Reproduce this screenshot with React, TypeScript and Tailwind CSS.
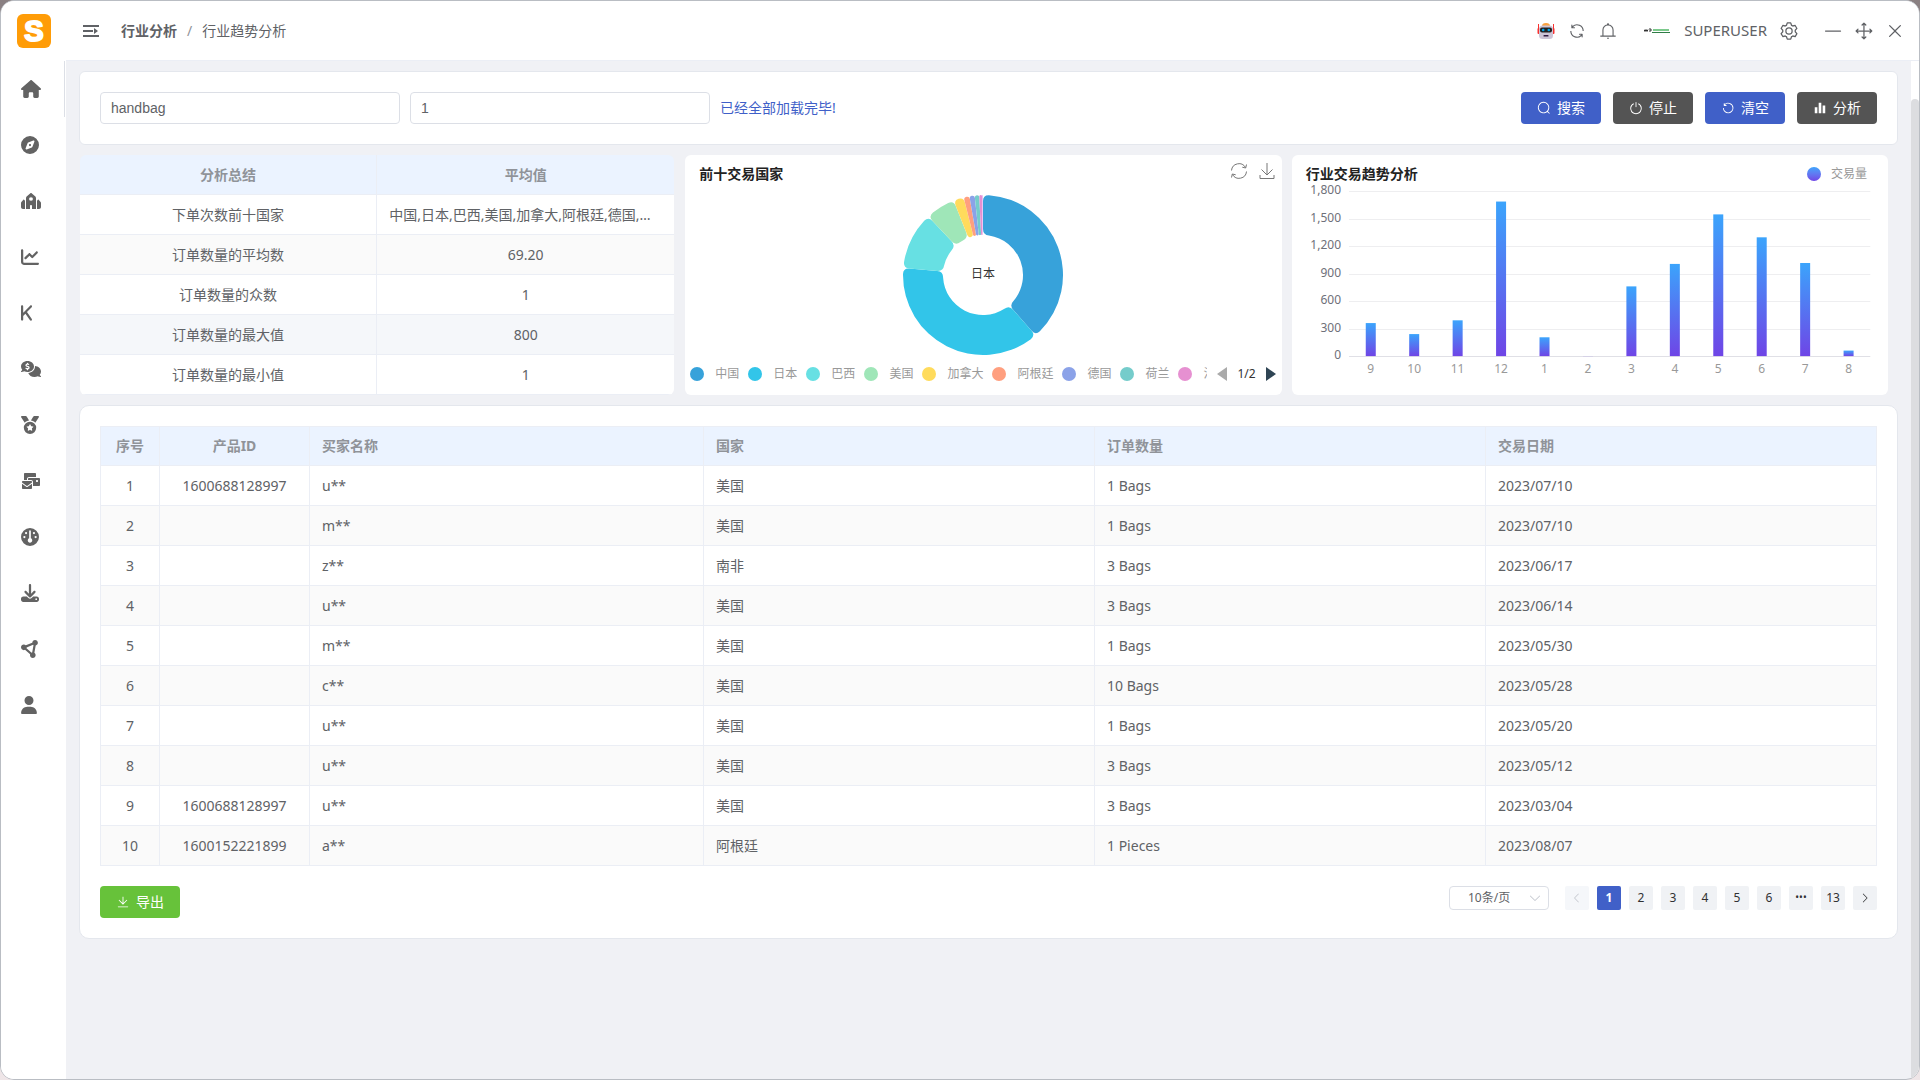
import React from 'react';
import {
  FaHouse,
  FaCompass,
  FaSynagogue,
  FaChartLine,
  FaK,
  FaCommentsDollar,
  FaMedal,
  FaEnvelopesBulk,
  FaGauge,
  FaDownload,
  FaCircleNodes,
  FaUser,
} from 'react-icons/fa6';

interface IconProps {
  className?: string;
}

// Element style icons, all on a 1024 grid
const ICON_PATHS = {
  close:
    'M764.288 214.592 512 466.88 259.712 214.592a31.936 31.936 0 0 0-45.12 45.12L466.752 512 214.528 764.224a31.936 31.936 0 1 0 45.12 45.184L512 557.184l252.288 252.288a31.936 31.936 0 0 0 45.12-45.12L557.12 512.064l252.288-252.352a31.936 31.936 0 1 0-45.12-45.184z',
  search:
    'm795.904 750.72 124.992 124.928a32 32 0 0 1-45.248 45.248L750.656 795.904a416 416 0 1 1 45.248-45.248zM480 832a352 352 0 1 0 0-704 352 352 0 0 0 0 704z',
  minus: 'M128 544h768a32 32 0 1 0 0-64H128a32 32 0 0 0 0 64z',
  rank:
    'm186.496 544 41.408 41.344a32 32 0 1 1-45.248 45.312l-96-96a32 32 0 0 1 0-45.312l96-96a32 32 0 1 1 45.248 45.312L186.496 480h290.816V186.432l-41.472 41.472a32 32 0 1 1-45.248-45.184l96-96.128a32 32 0 0 1 45.312 0l96 96.064a32 32 0 0 1-45.248 45.184l-41.344-41.28V480H832l-41.344-41.344a32 32 0 0 1 45.248-45.312l96 96a32 32 0 0 1 0 45.312l-96 96a32 32 0 0 1-45.248-45.312L832 544H541.312v293.44l41.344-41.28a32 32 0 1 1 45.248 45.248l-96 96a32 32 0 0 1-45.312 0l-96-96a32 32 0 1 1 45.312-45.248l41.408 41.408V544H186.496z',
  setting:
    'M600.704 64a32 32 0 0 1 30.464 22.208l35.2 109.376c14.784 7.232 28.928 15.36 42.432 24.512l112.384-24.192a32 32 0 0 1 34.432 15.36L944.32 364.8a32 32 0 0 1-4.032 37.504l-77.12 85.12a357.12 357.12 0 0 1 0 49.024l77.12 85.248a32 32 0 0 1 4.032 37.504l-88.704 153.6a32 32 0 0 1-34.432 15.296L708.8 803.904c-13.44 9.088-27.648 17.28-42.368 24.512l-35.264 109.376A32 32 0 0 1 600.704 960H423.296a32 32 0 0 1-30.464-22.208L357.696 828.48a351.616 351.616 0 0 1-42.56-24.64l-112.32 24.256a32 32 0 0 1-34.432-15.36L79.68 659.2a32 32 0 0 1 4.032-37.504l77.12-85.248a357.12 357.12 0 0 1 0-48.896l-77.12-85.248A32 32 0 0 1 79.68 364.8l88.704-153.6a32 32 0 0 1 34.432-15.296l112.32 24.256c13.568-9.152 27.776-17.408 42.56-24.64l35.2-109.312A32 32 0 0 1 423.232 64H600.64zm-23.424 64H446.72l-36.352 113.088-24.512 11.968a294.113 294.113 0 0 0-34.816 20.096l-22.656 15.36-116.224-25.088-65.28 113.152 79.68 88.192-1.92 27.136a293.12 293.12 0 0 0 0 40.192l1.92 27.136-79.808 88.192 65.344 113.152 116.224-25.024 22.656 15.296a294.113 294.113 0 0 0 34.816 20.096l24.512 11.968L446.72 896h130.688l36.48-113.152 24.448-11.904a288.282 288.282 0 0 0 34.752-20.096l22.592-15.296 116.288 25.024 65.28-113.152-79.744-88.192 1.92-27.136a293.12 293.12 0 0 0 0-40.256l-1.92-27.136 79.808-88.128-65.344-113.152-116.288 24.96-22.592-15.232a287.616 287.616 0 0 0-34.752-20.096l-24.448-11.904L577.344 128zM512 320a192 192 0 1 1 0 384 192 192 0 0 1 0-384zm0 64a128 128 0 1 0 0 256 128 128 0 0 0 0-256z',
  bell:
    'M512 64a64 64 0 0 1 64 64v64H448v-64a64 64 0 0 1 64-64zM256 768h512V448a256 256 0 1 0-512 0v320zm256-640a320 320 0 0 1 320 320v384H192V448a320 320 0 0 1 320-320zM96 768h832q32 0 32 32t-32 32H96q-32 0-32-32t32-32zm352 128h128a64 64 0 0 1-128 0z',
  refresh:
    'M771.776 794.88A384 384 0 0 1 128 512h64a320 320 0 0 0 555.712 216.448H654.72a32 32 0 1 1 0-64h149.056a32 32 0 0 1 32 32v148.928a32 32 0 1 1-64 0v-50.56zM276.288 295.616h92.992a32 32 0 0 1 0 64H220.16a32 32 0 0 1-32-32V178.56a32 32 0 0 1 64 0v50.56A384 384 0 0 1 896.128 512h-64a320 320 0 0 0-555.776-216.384z',
  refreshLeft:
    'M289.088 296.704h92.992a32 32 0 0 1 0 64H232.96a32 32 0 0 1-32-32V179.712a32 32 0 0 1 64 0v50.56a384 384 0 0 1 643.84 282.88 384 384 0 0 1-383.936 384 384 384 0 0 1-384-384h64a320 320 0 1 0 640 0 320 320 0 0 0-555.712-216.448z',
  power:
    'M352 159.872V230.4a352 352 0 1 0 320 0v-70.528A416.128 416.128 0 0 1 512 960a416 416 0 0 1-160-800.128zM512 64q32 0 32 32v320q0 32-32 32t-32-32V96q0-32 32-32z',
  histogram: 'M416 896V128h192v768H416zm-288 0V448h192v448H128zm576 0V320h192v576H704z',
  download:
    'M160 832h704a32 32 0 1 1 0 64H160a32 32 0 1 1 0-64zm384-253.696 236.288-236.352 45.248 45.248L508.8 704 192 387.2l45.248-45.248L480 584.704V128h64v450.304z',
  arrowLeft:
    'M609.408 149.376 277.76 489.6a32 32 0 0 0 0 44.672l331.648 340.352a29.12 29.12 0 0 0 41.728 0 30.592 30.592 0 0 0 0-42.752L339.264 511.936l311.872-319.872a30.592 30.592 0 0 0 0-42.688 29.12 29.12 0 0 0-41.728 0z',
  arrowRight:
    'M340.864 149.312a30.592 30.592 0 0 0 0 42.752L652.736 512 340.864 831.872a30.592 30.592 0 0 0 0 42.752 29.12 29.12 0 0 0 41.728 0L714.24 534.336a32 32 0 0 0 0-44.672L382.592 149.376a29.12 29.12 0 0 0-41.728 0z',
  arrowDown:
    'M831.872 340.864 512 652.672 192.128 340.864a30.592 30.592 0 0 0-42.752 0 29.12 29.12 0 0 0 0 41.6L489.664 714.24a32 32 0 0 0 44.672 0l340.288-331.712a29.12 29.12 0 0 0 0-41.728 30.592 30.592 0 0 0-42.752 0z',
};

const ElIcon: React.FC<IconProps & { name: keyof typeof ICON_PATHS }> = ({ name, className }) => (
  <svg viewBox="0 0 1024 1024" fill="currentColor" className={className} aria-hidden="true">
    <path d={ICON_PATHS[name]} />
  </svg>
);

const LogoIcon: React.FC<IconProps> = ({ className }) => (
  <svg viewBox="0 0 34 34" className={className} aria-hidden="true">
    <rect width="34" height="34" rx="6" fill="#ff9c07" />
    <text
      x="17"
      y="27"
      textAnchor="middle"
      fontFamily="Liberation Sans, sans-serif"
      fontWeight="700"
      fontSize="29"
      fill="#fff"
      stroke="#fff"
      strokeWidth="2"
      strokeLinejoin="round"
    >
      S
    </text>
  </svg>
);

const FoldIcon: React.FC<IconProps> = ({ className }) => (
  <svg viewBox="0 0 16 14" fill="currentColor" className={className} aria-hidden="true">
    <path d="M0 1h16v2H0zM0 6h10v2H0zM0 11h16v2H0zM11 4l4 3-4 3z" />
  </svg>
);

const RobotIcon: React.FC<IconProps> = ({ className }) => (
  <svg viewBox="0 0 18 18" className={className} aria-hidden="true">
    <path d="M1.5 2v7M16.5 2v7" stroke="#f8312f" strokeWidth="1" />
    <rect x="0.5" y="6" width="2.5" height="6" rx="1" fill="#f8312f" />
    <rect x="15" y="6" width="2.5" height="6" rx="1" fill="#f8312f" />
    <path d="M5 4a4 3 0 0 1 8 0z" fill="#f9a03f" />
    <rect x="2" y="3.5" width="14" height="13.5" rx="3.5" fill="#cdc4d6" />
    <rect x="3" y="5.5" width="12" height="5" rx="2" fill="#212121" />
    <circle cx="6.2" cy="8" r="1.3" fill="#00a6ed" />
    <circle cx="11.8" cy="8" r="1.3" fill="#00a6ed" />
    <rect x="6.5" y="13" width="5" height="1.5" rx="0.5" fill="#321b41" />
  </svg>
);

const navItems = [
  { label: '首页', icon: <FaHouse className="h-[18px] w-5" /> },
  { label: '发现', icon: <FaCompass className="size-[18px]" /> },
  { label: '店铺', icon: <FaSynagogue className="h-[18px] w-5" /> },
  { label: '趋势', icon: <FaChartLine className="size-[18px]" /> },
  { label: '关键词', icon: <FaK className="h-[18px] w-[11px]" /> },
  { label: '询盘', icon: <FaCommentsDollar className="h-[18px] w-5" /> },
  { label: '排名', icon: <FaMedal className="size-[18px]" /> },
  { label: '邮件', icon: <FaEnvelopesBulk className="h-[18px] w-5" /> },
  { label: '仪表盘', icon: <FaGauge className="size-[18px]" /> },
  { label: '下载', icon: <FaDownload className="size-[18px]" /> },
  { label: '网络', icon: <FaCircleNodes className="size-[18px]" /> },
  { label: '用户', icon: <FaUser className="h-[18px] w-4" /> },
];

const summaryRows = [
  { label: '下单次数前十国家', value: '中国,日本,巴西,美国,加拿大,阿根廷,德国,荷兰,法国,英国', bg: 'bg-white' },
  { label: '订单数量的平均数', value: '69.20', bg: 'bg-[#fafafa]' },
  { label: '订单数量的众数', value: '1', bg: 'bg-white' },
  { label: '订单数量的最大值', value: '800', bg: 'bg-[#f5f7fa]' },
  { label: '订单数量的最小值', value: '1', bg: 'bg-white' },
];

// end is the closing angle in degrees, clockwise from the top
const slices = [
  { name: '中国', color: '#37a2da', end: 139 },
  { name: '日本', color: '#32c5e9', end: 275 },
  { name: '巴西', color: '#67e0e3', end: 317 },
  { name: '美国', color: '#9fe6b8', end: 338.5 },
  { name: '加拿大', color: '#ffdb5c', end: 346 },
  { name: '阿根廷', color: '#ff9f7f', end: 350.2 },
  { name: '德国', color: '#8ba2e8', end: 354 },
  { name: '荷兰', color: '#75cccb', end: 357.3 },
  { name: '法国', color: '#e690d1', end: 359.3 },
  { name: '英国', color: '#e7bcf3', end: 360 },
];

const months = [
  { month: '9', value: 360 },
  { month: '10', value: 240 },
  { month: '11', value: 390 },
  { month: '12', value: 1685 },
  { month: '1', value: 205 },
  { month: '2', value: 1 },
  { month: '3', value: 760 },
  { month: '4', value: 1005 },
  { month: '5', value: 1545 },
  { month: '6', value: 1295 },
  { month: '7', value: 1015 },
  { month: '8', value: 60 },
];

const orders = [
  { productId: '1600688128997', buyer: 'u**', country: '美国', amount: '1 Bags', date: '2023/07/10' },
  { productId: '', buyer: 'm**', country: '美国', amount: '1 Bags', date: '2023/07/10' },
  { productId: '', buyer: 'z**', country: '南非', amount: '3 Bags', date: '2023/06/17' },
  { productId: '', buyer: 'u**', country: '美国', amount: '3 Bags', date: '2023/06/14' },
  { productId: '', buyer: 'm**', country: '美国', amount: '1 Bags', date: '2023/05/30' },
  { productId: '', buyer: 'c**', country: '美国', amount: '10 Bags', date: '2023/05/28' },
  { productId: '', buyer: 'u**', country: '美国', amount: '1 Bags', date: '2023/05/20' },
  { productId: '', buyer: 'u**', country: '美国', amount: '3 Bags', date: '2023/05/12' },
  { productId: '1600688128997', buyer: 'u**', country: '美国', amount: '3 Bags', date: '2023/03/04' },
  { productId: '1600152221899', buyer: 'a**', country: '阿根廷', amount: '1 Pieces', date: '2023/08/07' },
];

const pages = ['1', '2', '3', '4', '5', '6', '•••', '13'];

const polar = (r: number, deg: number) => {
  const a = ((deg - 90) * Math.PI) / 180;
  return `${(80 + r * Math.cos(a)).toFixed(2)} ${(80 + r * Math.sin(a)).toFixed(2)}`;
};

// ring sector with rounded corners
const slicePath = (start: number, end: number) => {
  const outer = 80;
  const inner = 40;
  const span = ((end - start) * Math.PI) / 180;
  const co = Math.min(6, (span * outer) / 2);
  const ci = Math.min(6, (span * inner) / 2);
  const ao = ((co / outer) * 180) / Math.PI;
  const ai = ((ci / inner) * 180) / Math.PI;
  const large = end - start > 180 ? 1 : 0;
  return [
    `M${polar(inner + ci, start)}`,
    `L${polar(outer - co, start)}`,
    `Q${polar(outer, start)} ${polar(outer, start + ao)}`,
    `A${outer} ${outer} 0 ${large} 1 ${polar(outer, end - ao)}`,
    `Q${polar(outer, end)} ${polar(outer - co, end)}`,
    `L${polar(inner + ci, end)}`,
    `Q${polar(inner, end)} ${polar(inner, end - ai)}`,
    `A${inner} ${inner} 0 ${large} 0 ${polar(inner, start + ai)}`,
    `Q${polar(inner, start)} ${polar(inner + ci, start)}`,
    'Z',
  ].join(' ');
};

const Sidebar: React.FC = () => (
  <aside className="flex w-[65px] shrink-0 flex-col bg-white">
    <div className="flex h-[60px] items-center pl-4">
      <LogoIcon className="size-[34px]" />
    </div>
    <nav className="relative flex flex-col">
      <span className="absolute top-0 right-px h-14 w-px bg-[#dcdfe6]" />
      {navItems.map((item) => (
        <a key={item.label} href="#" aria-label={item.label} className="flex h-14 items-center pl-5 text-[#636363]">
          {item.icon}
        </a>
      ))}
    </nav>
  </aside>
);

const TopBar: React.FC = () => (
  <header className="flex h-[60px] items-center border-b border-[#ebeef5] bg-white pr-[14px] pl-[17px] text-[#606266]">
    <button type="button" aria-label="折叠菜单">
      <FoldIcon className="h-[14px] w-4" />
    </button>
    <nav className="ml-[22px] flex items-center text-sm">
      <a href="#" className="font-bold">行业分析</a>
      <span className="mx-[10px] text-[#909399]">/</span>
      <span>行业趋势分析</span>
    </nav>
    <div className="ml-auto flex items-center">
      <div className="flex items-center gap-[13px]">
        <RobotIcon className="size-[18px]" />
        <button type="button" aria-label="刷新"><ElIcon name="refresh" className="size-[18px]" /></button>
        <button type="button" aria-label="通知"><ElIcon name="bell" className="size-[18px]" /></button>
      </div>
      <svg viewBox="0 0 26 6" className="ml-[27px] h-[6px] w-[26px]" aria-hidden="true">
        <path d="M0 1.5l1 2 1-2 1 2 1-2M6 0v4M6 2h2" stroke="#333" fill="none" />
        <path d="M9 2h16" stroke="#7cc98c" strokeWidth="2" />
        <path d="M8 4.5h18" stroke="#2f7d46" />
      </svg>
      <span className="ml-[14px] text-[15px]">SUPERUSER</span>
      <button type="button" aria-label="设置" className="ml-3"><ElIcon name="setting" className="size-5" /></button>
      <div className="ml-6 flex items-center gap-[11px]">
        <button type="button" aria-label="最小化"><ElIcon name="minus" className="size-5" /></button>
        <button type="button" aria-label="移动"><ElIcon name="rank" className="size-5" /></button>
        <button type="button" aria-label="关闭"><ElIcon name="close" className="size-5" /></button>
      </div>
    </div>
  </header>
);

const SearchBar: React.FC = () => {
  const input =
    "h-8 w-[300px] rounded border border-[#dcdfe6] bg-white px-[10px] font-['Liberation_Sans',sans-serif] text-sm text-[#606266] outline-none";
  const button = 'flex h-8 w-20 items-center justify-center gap-[6px] rounded text-sm text-white';
  return (
    <section className="flex items-center rounded-md border border-[#e4e7ed] bg-white p-5">
      <div className="flex items-center gap-[10px]">
        <input type="text" aria-label="关键词" defaultValue="handbag" className={input} />
        <input type="text" aria-label="页数" defaultValue="1" className={input} />
        <span className="text-sm text-[#3f5fc8]">已经全部加载完毕!</span>
      </div>
      <div className="ml-auto flex gap-3">
        <button type="button" className={`${button} bg-[#4060c8]`}>
          <ElIcon name="search" className="size-[14px]" />
          搜索
        </button>
        <button type="button" className={`${button} bg-[#545454]`}>
          <ElIcon name="power" className="size-[14px]" />
          停止
        </button>
        <button type="button" className={`${button} bg-[#4060c8]`}>
          <ElIcon name="refreshLeft" className="size-[14px]" />
          清空
        </button>
        <button type="button" className={`${button} bg-[#545454]`}>
          <ElIcon name="histogram" className="size-[14px]" />
          分析
        </button>
      </div>
    </section>
  );
};

const SummaryTable: React.FC = () => (
  <div className="overflow-hidden rounded-md">
    <table className="w-full table-fixed border-separate border-spacing-0 text-center text-sm text-[#606266]">
      <thead>
        <tr className="bg-[#ebf3ff] text-[#909399]">
          <th className="h-10 border-r border-b border-[#ebeef5] p-0 font-bold">分析总结</th>
          <th className="h-10 border-b border-[#ebeef5] p-0 font-bold">平均值</th>
        </tr>
      </thead>
      <tbody>
        {summaryRows.map((row) => (
          <tr key={row.label} className={row.bg}>
            <td className="h-10 border-r border-b border-[#ebeef5] px-3 py-0">{row.label}</td>
            <td className="h-10 truncate border-b border-[#ebeef5] px-3 py-0">{row.value}</td>
          </tr>
        ))}
      </tbody>
    </table>
  </div>
);

const CountryChart: React.FC = () => (
  <div className="flex h-60 flex-col rounded-md bg-white">
    <div className="flex h-10 shrink-0 items-start justify-between pt-[7px] pr-[6px] pl-[14px]">
      <h2 className="text-sm leading-6 font-bold text-[#222]">前十交易国家</h2>
      <div className="flex gap-[10px] text-[#777]">
        <button type="button" aria-label="刷新图表">
          <svg viewBox="0 0 18 18" fill="none" stroke="currentColor" className="size-[18px]" aria-hidden="true">
            <path d="M1.5 8.5a7.5 7.5 0 0 1 14-3M16.5 9.5a7.5 7.5 0 0 1-14 3M16.5 2.5l-.8 3.5-3.4-.8M1.5 15.5l.8-3.5 3.4.8" />
          </svg>
        </button>
        <button type="button" aria-label="保存图片">
          <svg viewBox="0 0 18 18" fill="none" stroke="currentColor" className="size-[18px]" aria-hidden="true">
            <path d="M9 1v12M3.5 7.5 9 13l5.5-5.5M2 13v3.5h14V13" />
          </svg>
        </button>
      </div>
    </div>
    <svg viewBox="0 0 160 160" className="h-40 w-40 shrink-0 self-center">
      {slices.map((slice, i) => (
        <path key={slice.name} d={slicePath(i === 0 ? 0 : slices[i - 1].end, slice.end)} fill={slice.color} />
      ))}
      <text x="80" y="83" textAnchor="middle" fontSize="12" fill="#333">日本</text>
    </svg>
    <div className="flex h-[38px] items-center pr-[6px] pl-[5px] text-xs">
      <ul className="flex min-w-0 flex-1 gap-[9px] overflow-hidden whitespace-nowrap text-[#999]">
        {slices.slice(0, 9).map((slice) => (
          <li key={slice.name} className="flex shrink-0 items-center gap-[11px]">
            <span className="size-[14px] rounded-full" style={{ backgroundColor: slice.color }} />
            {slice.name}
          </li>
        ))}
      </ul>
      <div className="ml-[10px] flex items-center gap-[10px] text-[#333]">
        <button type="button" aria-label="上一页图例">
          <svg viewBox="0 0 10 14" className="h-[14px] w-[10px]"><path d="M10 0v14L0 7z" fill="#aaa" /></svg>
        </button>
        <span>1/2</span>
        <button type="button" aria-label="下一页图例">
          <svg viewBox="0 0 10 14" className="h-[14px] w-[10px]"><path d="M0 0v14l10-7z" fill="#2f4554" /></svg>
        </button>
      </div>
    </div>
  </div>
);

const TrendChart: React.FC = () => {
  const left = 57;
  const right = 578;
  const bottom = 173;
  const band = (right - left) / months.length;
  const toHeight = (value: number) => (value / 1800) * 165;
  return (
    <div className="flex h-60 flex-col rounded-md bg-white">
      <div className="flex h-7 shrink-0 items-start justify-between pt-[7px] pr-[21px] pl-[14px]">
        <h2 className="text-sm leading-6 font-bold text-[#222]">行业交易趋势分析</h2>
        <span className="flex items-center gap-[10px] text-xs leading-6 text-[#999]">
          <span className="size-[14px] rounded-full bg-linear-to-b from-[#3ba4fc] to-[#6f45e6]" />
          交易量
        </span>
      </div>
      <svg viewBox="0 0 596 212" className="w-full overflow-visible">
        <defs>
          <linearGradient id="bar" x1="0" y1="0" x2="0" y2="1">
            <stop offset="0" stopColor="#3ba4fc" />
            <stop offset="1" stopColor="#6f45e6" />
          </linearGradient>
        </defs>
        {[0, 300, 600, 900, 1200, 1500, 1800].map((tick) => {
          const y = bottom - toHeight(tick);
          return (
            <g key={tick}>
              <path d={`M${left} ${Math.round(y) + 0.5}H${right}`} stroke={tick === 0 ? '#e0e0e6' : '#eeeef0'} />
              <text x="49" y={y + 3} textAnchor="end" fontSize="12" fill="#6e7079">
                {tick.toLocaleString('en-US')}
              </text>
            </g>
          );
        })}
        {months.map((item, i) => {
          const center = left + band * (i + 0.5);
          const h = toHeight(item.value);
          return (
            <g key={item.month}>
              <rect x={center - 5} y={bottom - h} width="10" height={h} fill="url(#bar)" />
              <text x={center} y="190" textAnchor="middle" fontSize="12" fill="#999">{item.month}</text>
            </g>
          );
        })}
      </svg>
    </div>
  );
};

const OrdersTable: React.FC = () => {
  const cell = 'border-r border-b border-[#ebeef5] px-3 py-0';
  return (
    <table className="w-full table-fixed border-separate border-spacing-0 border-t border-l border-[#ebeef5] text-left text-sm text-[#606266]">
      <colgroup>
        <col className="w-[59px]" />
        <col className="w-[150px]" />
        <col className="w-[394px]" />
        <col />
        <col />
        <col />
      </colgroup>
      <thead>
        <tr className="bg-[#ebf3ff] text-[#909399]">
          <th className={`${cell} h-[39px] text-center font-bold`}>序号</th>
          <th className={`${cell} h-[39px] text-center font-bold`}>产品ID</th>
          <th className={`${cell} h-[39px] font-bold`}>买家名称</th>
          <th className={`${cell} h-[39px] font-bold`}>国家</th>
          <th className={`${cell} h-[39px] font-bold`}>订单数量</th>
          <th className={`${cell} h-[39px] font-bold`}>交易日期</th>
        </tr>
      </thead>
      <tbody>
        {orders.map((order, i) => (
          <tr key={i} className={i % 2 ? 'bg-[#fafafa]' : 'bg-white'}>
            <td className={`${cell} h-10 text-center`}>{i + 1}</td>
            <td className={`${cell} h-10 text-center`}>{order.productId}</td>
            <td className={`${cell} h-10`}>{order.buyer}</td>
            <td className={`${cell} h-10`}>{order.country}</td>
            <td className={`${cell} h-10`}>{order.amount}</td>
            <td className={`${cell} h-10`}>{order.date}</td>
          </tr>
        ))}
      </tbody>
    </table>
  );
};

const Pagination: React.FC = () => (
  <div className="flex items-center gap-2 text-xs text-[#303133]">
    <div className="relative mr-2">
      <select
        aria-label="每页条数"
        className="h-6 w-[100px] appearance-none rounded border border-[#dcdfe6] bg-white pl-[18px] text-xs text-[#606266] outline-none"
      >
        <option>10条/页</option>
      </select>
      <ElIcon name="arrowDown" className="pointer-events-none absolute top-[5px] right-[7px] size-[14px] text-[#c0c4cc]" />
    </div>
    <button type="button" aria-label="上一页" disabled className="flex size-6 items-center justify-center rounded-xs bg-[#f5f7fa] text-[#c0c4cc]">
      <ElIcon name="arrowLeft" className="size-3" />
    </button>
    {pages.map((page) => (
      <button
        key={page}
        type="button"
        className={`flex size-6 items-center justify-center rounded-xs ${
          page === '1' ? 'bg-[#4060c8] font-bold text-white' : page === '•••' ? 'bg-[#f0f2f5] text-[10px]' : 'bg-[#f0f2f5]'
        }`}
      >
        {page}
      </button>
    ))}
    <button type="button" aria-label="下一页" className="flex size-6 items-center justify-center rounded-xs bg-[#f0f2f5]">
      <ElIcon name="arrowRight" className="size-3" />
    </button>
  </div>
);

const App: React.FC = () => {
  return (
    <div className="flex min-h-screen bg-linear-to-b from-[#8a8082] to-[#efe6e8] font-['Noto_Sans','Noto_Sans_CJK_SC',sans-serif]">
      <div className="flex flex-1 overflow-hidden rounded-[14px] border border-[#b9bdc3] bg-[#f0f1f5]">
        <Sidebar />
        <div className="flex min-w-0 flex-1 flex-col">
          <TopBar />
          <div className="flex flex-1">
            <main className="flex min-w-0 flex-1 flex-col gap-[10px] px-[13px] py-[10px]">
              <SearchBar />
              <div className="grid grid-cols-3">
                <div className="pr-[11px] pl-px"><SummaryTable /></div>
                <div className="pr-[10px]"><CountryChart /></div>
                <div className="pr-[10px]"><TrendChart /></div>
              </div>
              <section className="rounded-[10px] border border-[#e4e7ed] bg-white p-5">
                <OrdersTable />
                <div className="mt-5 flex items-start justify-between">
                  <button type="button" className="flex h-8 w-20 items-center justify-center gap-[6px] rounded bg-[#67c23a] text-sm text-white">
                    <ElIcon name="download" className="size-[14px]" />
                    导出
                  </button>
                  <Pagination />
                </div>
              </section>
            </main>
            <div className="flex w-2 shrink-0 flex-col bg-white pt-[38px]">
              <div className="flex-1 rounded-t bg-[#dcdde0]" />
            </div>
          </div>
        </div>
      </div>
    </div>
  );
};

export default App;
